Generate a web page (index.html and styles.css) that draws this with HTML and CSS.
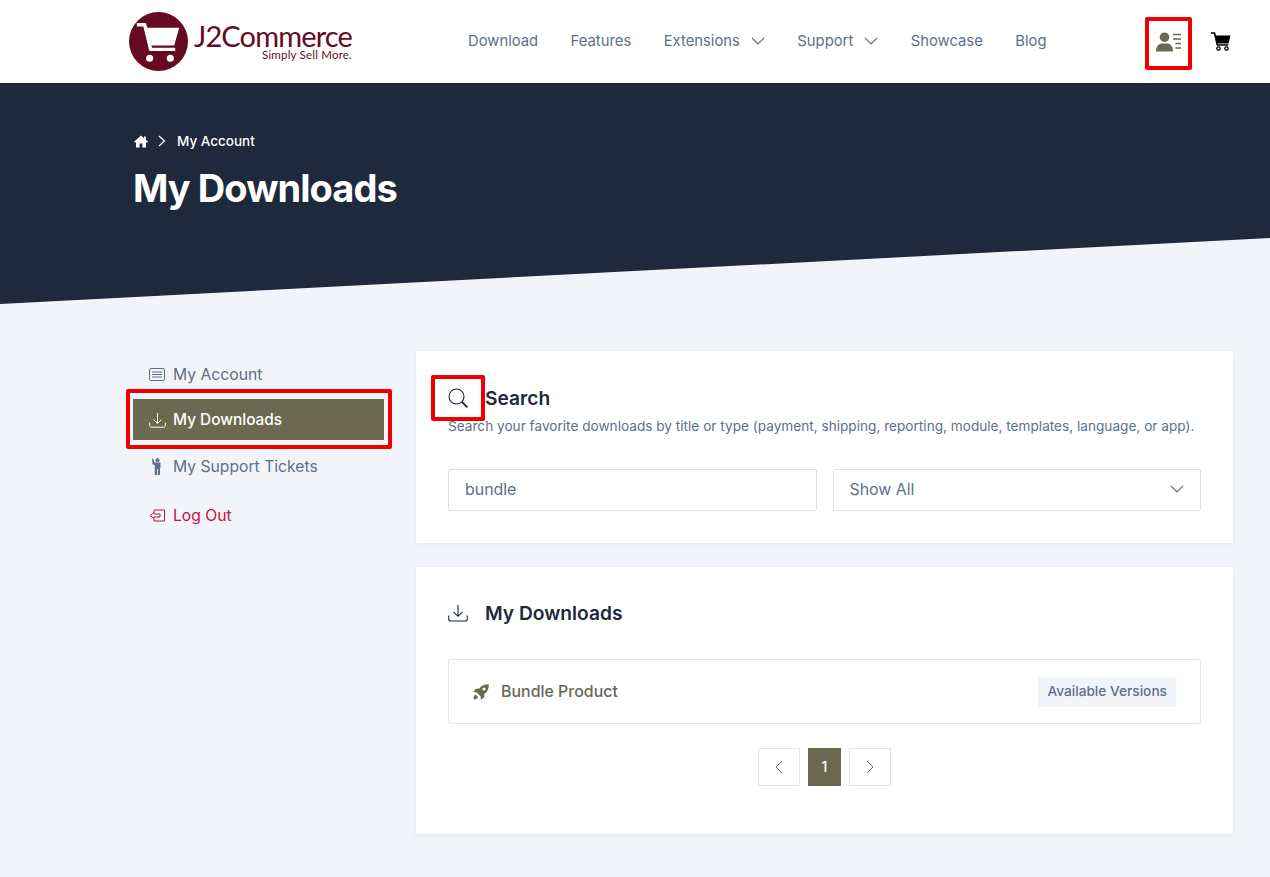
FILE: index.html
```html
<!DOCTYPE html>
<html lang="en">
<head>
  <meta charset="UTF-8">
  <meta name="viewport" content="width=device-width, initial-scale=1.0">
  <title>My Downloads</title>
  <link rel="stylesheet" href="styles.css">
</head>
<body>
  <header class="topbar">
    <a class="logo" href="#">
      <svg class="logo-mark" viewBox="0 0 60 60" width="59" height="59">
        <circle cx="30" cy="30" r="30" fill="#660a24"/>
        <path d="M8 13h8l6 25h25" fill="none" stroke="#fff" stroke-width="3.500" stroke-linejoin="round"/>
        <path d="M18 16h33l-5 18H22z" fill="#fff"/>
        <circle cx="21" cy="47" r="3.600" fill="#fff"/>
        <circle cx="42" cy="47" r="3.600" fill="#fff"/>
      </svg>
      <span class="logo-text">
        <span class="logo-name">J2Commerce</span>
        <span class="logo-tag">Simply Sell More.</span>
      </span>
    </a>
    <nav class="mainnav">
      <a href="#">Download</a>
      <a href="#">Features</a>
      <a href="#">Extensions <svg class="caret" viewBox="0 0 14 8" width="14" height="8"><path d="M1 1l6 6 6-6"/></svg></a>
      <a href="#">Support <svg class="caret" viewBox="0 0 14 8" width="14" height="8"><path d="M1 1l6 6 6-6"/></svg></a>
      <a href="#">Showcase</a>
      <a href="#">Blog</a>
    </nav>
    <div class="topicons">
      <a class="user-link" href="#">
        <svg viewBox="0 0 26 20" width="26" height="20">
          <circle cx="8.500" cy="5.200" r="4.800" fill="#6b6a50"/>
          <path d="M0 19.500c0-5.500 3-8 6-8h5c3 0 6 2.500 6 8z" fill="#6b6a50"/>
          <path d="M17 2.500h8M17 7h8M19.500 11.500h5.500M19.500 16h5.500" stroke="#6b6a50" stroke-width="1.300"/>
        </svg>
        <span class="redbox"></span>
      </a>
      <a class="cart-link" href="#">
        <svg viewBox="0 0 20 19" width="20" height="19">
          <path d="M0 1h3.500l2.800 12h11" fill="none" stroke="#000" stroke-width="1.600"/>
          <path d="M4.500 3.500H19.500l-2 8H6.300z" fill="#000"/>
          <circle cx="7.500" cy="16.500" r="1.700" fill="none" stroke="#000" stroke-width="1.300"/>
          <circle cx="15.500" cy="16.500" r="1.700" fill="none" stroke="#000" stroke-width="1.300"/>
        </svg>
      </a>
    </div>
  </header>

  <section class="hero">
    <div class="crumbs">
      <svg viewBox="0 0 14 13" width="14" height="13"><path d="M7 .5L0 6.800l1 1L2 7v5.500h3.600V8.500h2.800v4H12V7l1 .8 1-1-2.200-2V1.500H10v1.700z" fill="#fff"/></svg>
      <svg class="crumb-sep" viewBox="0 0 8 12" width="8" height="12"><path d="M1 1l5.500 5L1 11"/></svg>
      <span>My Account</span>
    </div>
    <h1>My Downloads</h1>
  </section>

  <div class="page">
    <aside class="sidenav">
      <a class="side-item" href="#">
        <svg viewBox="0 0 16 13" width="16" height="13"><rect x=".5" y=".5" width="15" height="12" rx="1.500"/><path d="M3 4h10M3 6.500h10M3 9h10"/></svg>
        My Account
      </a>
      <a class="side-item active" href="#">
        <svg viewBox="0 0 17 16" width="17" height="16"><path d="M8.500 1v10M4.500 7.500l4 4 4-4M.7 10.500v3c0 1 .6 1.700 1.600 1.700h12.400c1 0 1.600-.7 1.600-1.700v-3"/></svg>
        My Downloads
        <span class="redbox"></span>
      </a>
      <a class="side-item support" href="#">
        <svg viewBox="0 0 12 17" width="12" height="17"><circle cx="6.500" cy="2.200" r="2" class="solid"/><path class="solid" d="M1 .5l1 0 1.500 4h6v5.500H9V17H6.800v-6H6v6H3.800V7.500L1.500 6z"/></svg>
        My Support Tickets
      </a>
      <a class="side-item logout" href="#">
        <svg viewBox="0 0 17 13" width="17" height="13"><path d="M5 3.500V1h10.500v11H5V9.500M5 3.500L1 6.500l4 3M5 3.500v1.500h6v3H5v1.500"/></svg>
        Log Out
      </a>
    </aside>

    <main class="content">
      <section class="card search-card">
        <div class="card-head">
          <span class="head-icon">
            <svg viewBox="0 0 20 20" width="20" height="20"><circle cx="8.500" cy="8.500" r="7.500"/><path d="M14 14l5.300 5.300" stroke-width="1.800"/></svg>
            <span class="redbox"></span>
          </span>
          <h2>Search</h2>
        </div>
        <p class="hint">Search your favorite downloads by title or type (payment, shipping, reporting, module, templates, language, or app).</p>
        <div class="filters">
          <input class="field" type="text" value="bundle">
          <div class="field select">
            <span>Show All</span>
            <svg class="caret" viewBox="0 0 14 8" width="14" height="8"><path d="M1 1l6 6 6-6"/></svg>
          </div>
        </div>
      </section>

      <section class="card downloads-card">
        <div class="card-head">
          <span class="head-icon">
            <svg viewBox="0 0 20 18" width="20" height="18"><path d="M10 1v11M5.500 7.800l4.500 4.500 4.500-4.500M.7 11.500v3.500c0 1.200.8 2 2 2h14.600c1.200 0 2-.8 2-2v-3.500"/></svg>
          </span>
          <h2>My Downloads</h2>
        </div>
        <div class="product-row">
          <span class="product-name">
            <svg viewBox="0 0 16 16" width="16" height="16"><path d="M15.800.2C11.500.1 8.300 1.500 6 4.700H2.700L.2 8.300h3.300l4.200 4.200v3.300l3.600-2.500V10c3.200-2.300 4.600-5.500 4.500-9.800zM11 3.500a1.500 1.500 0 110 3 1.500 1.500 0 010-3zM2.600 10.600c-1.300.8-2 2.300-2.100 4.800 2.500-.1 4-.8 4.800-2.100z" fill="#6b6a50"/></svg>
            Bundle Product
          </span>
          <span class="badge">Available Versions</span>
        </div>
        <div class="pager">
          <a class="page-btn" href="#"><svg viewBox="0 0 8 14" width="8" height="14"><path d="M7 1L1 7l6 6"/></svg></a>
          <a class="page-num" href="#">1</a>
          <a class="page-btn" href="#"><svg viewBox="0 0 8 14" width="8" height="14"><path d="M1 1l6 6-6 6"/></svg></a>
        </div>
      </section>
    </main>
  </div>
</body>
</html>
```

FILE: styles.css
```css
* {
  box-sizing: border-box;
}

body {
  margin: 0;
  min-height: 877px;
  font-family: "Inter", Arial, sans-serif;
  background-color: #f1f5f9;
  color: #1e293b;
  overflow-x: hidden;
}

a {
  text-decoration: none;
  color: inherit;
}

svg {
  flex: none;
  display: block;
}

.redbox {
  position: absolute;
  border: 4px solid #ee0000;
  border-radius: 2px;
  pointer-events: none;
}

/* top bar */
.topbar {
  height: 83px;
  background-color: #fff;
  display: flex;
  align-items: center;
  padding: 0 39px 0 129px;
}

.logo {
  display: flex;
  align-items: center;
  gap: 6px;
  width: 339px;
}

.logo-text {
  display: flex;
  flex-direction: column;
  align-items: flex-end;
  margin-top: -1px;
  color: #660a24;
  font-family: "Lato", sans-serif;
}

.logo-name {
  font-size: 29px;
  line-height: 27px;
  letter-spacing: -0.85px;
}

.logo-tag {
  font-size: 11.500px;
  line-height: 12px;
  letter-spacing: .2px;
}

.mainnav {
  display: flex;
  align-items: center;
  gap: 32.500px;
  margin-top: -2px;
  font-size: 14.800px;
  color: #5f6f85;
}

.mainnav a {
  display: flex;
  align-items: center;
  gap: 11px;
}

.caret path {
  fill: none;
  stroke: #5f6f85;
  stroke-width: 1.100;
}

.topicons {
  margin-left: auto;
  display: flex;
  align-items: center;
  gap: 29px;
}

.user-link {
  position: relative;
}

.user-link .redbox {
  left: -11px;
  top: -15px;
  width: 47px;
  height: 53px;
}

/* dark banner */
.hero {
  height: 221px;
  padding: 47px 133px 0 134px;
  background-color: #1e293b;
  color: #fff;
  clip-path: polygon(0 0, 100% 0, 100% 155px, 0 100%);
}

.crumbs {
  display: flex;
  align-items: center;
  gap: 10px;
  height: 22px;
  font-size: 13.500px;
  font-weight: 500;
}

.crumb-sep path {
  fill: none;
  stroke: #fff;
  stroke-width: 1.200;
}

.crumbs span {
  margin-left: 1px;
}

.hero h1 {
  margin: 14px 0 0 -1px;
  font-size: 38px;
  line-height: 44px;
  font-weight: 700;
  letter-spacing: -0.95px;
}

/* page body */
.page {
  display: grid;
  grid-template-columns: 251px 817px;
  gap: 32px;
  padding: 47px 0 43px 133px;
}

.sidenav {
  display: flex;
  flex-direction: column;
  padding-top: 3px;
}

.side-item {
  position: relative;
  display: flex;
  align-items: center;
  gap: 8px;
  height: 41px;
  padding-left: 16px;
  font-size: 15.700px;
  color: #5f6f85;
}

.side-item svg {
  fill: none;
  stroke: currentColor;
  stroke-width: 1;
}

.side-item svg .solid {
  fill: currentColor;
  stroke: none;
}

.side-item.active {
  margin-top: 4px;
  background-color: #6b6a50;
  color: #fff;
  font-size: 15.400px;
  font-weight: 500;
  gap: 7px;
}

.side-item.active .redbox {
  left: -7px;
  top: -10px;
  width: 266px;
  height: 60px;
}

.side-item.support {
  margin-top: 6px;
  gap: 10px;
  padding-left: 18px;
}

.side-item.logout {
  margin-top: 8px;
  gap: 7px;
  color: #c8103f;
}

.content {
  display: flex;
  flex-direction: column;
  gap: 24px;
}

.card {
  background-color: #fff;
  padding: 32px;
  box-shadow: 0 1px 6px rgba(30, 41, 59, 0.07);
}

.search-card {
  height: 192px;
}

.downloads-card {
  height: 267px;
  padding-top: 31px;
}

.card-head {
  display: flex;
  align-items: center;
  height: 30px;
}

.head-icon {
  position: relative;
  width: 37px;
}

.head-icon svg {
  fill: none;
  stroke: #1e293b;
  stroke-width: 1.100;
}

.head-icon .redbox {
  left: -17px;
  top: -13px;
  width: 54px;
  height: 46px;
}

.card h2 {
  margin: 0;
  font-size: 19.200px;
  line-height: 30px;
  font-weight: 600;
}

.hint {
  margin: 3px 0 0;
  font-size: 13.640px;
  line-height: 20px;
  color: #5f6f85;
  white-space: nowrap;
}

.filters {
  display: grid;
  grid-template-columns: 1fr 1fr;
  gap: 16px;
  margin-top: 33px;
}

.field {
  width: 100%;
  height: 42px;
  padding: 0 16px 2px;
  border: 1px solid #dde1e6;
  border-radius: 2px;
  background-color: #fff;
  font-family: inherit;
  font-size: 15.900px;
  color: #5f6f85;
}

.select {
  display: flex;
  align-items: center;
  justify-content: space-between;
}

.product-row {
  display: flex;
  align-items: center;
  justify-content: space-between;
  height: 65px;
  margin-top: 31px;
  padding: 0 24px;
  border: 1px solid #e3e6ea;
  border-radius: 2px;
}

.product-name {
  display: flex;
  align-items: center;
  gap: 12px;
  font-size: 15.950px;
  font-weight: 500;
  color: #68685a;
}

.badge {
  padding: 6px 9px 8px;
  background-color: #f1f5f9;
  font-size: 13.700px;
  font-weight: 500;
  color: #5f6f85;
}

.pager {
  display: flex;
  justify-content: center;
  gap: 8px;
  margin-top: 24px;
}

.page-btn,
.page-num {
  display: flex;
  align-items: center;
  justify-content: center;
  height: 38px;
}

.page-btn {
  width: 42px;
  border: 1px solid #e3e6ea;
}

.page-btn svg {
  fill: none;
  stroke: #6b6a50;
  stroke-width: 1;
}

.page-num {
  width: 33px;
  padding-bottom: 2px;
  background-color: #6b6a50;
  color: #fff;
  font-size: 14px;
  font-weight: 500;
}
```
